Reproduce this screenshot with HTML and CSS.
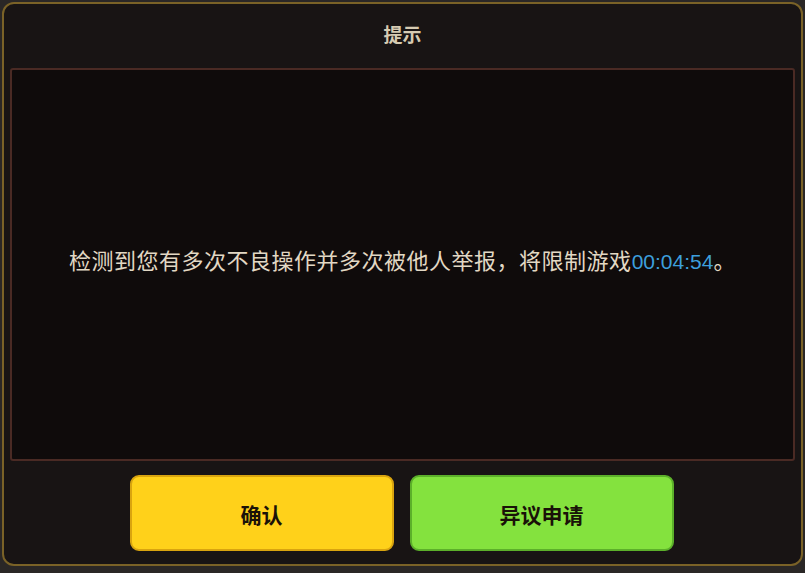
FILE: index.html
```html
<!DOCTYPE html>
<html lang="zh-CN">
<head>
    <meta charset="UTF-8">
    <title>提示</title>
    <link rel="stylesheet" href="styles.css">
</head>
<body>
    <div class="dialog">
        <div class="dialog-title">提示</div>
        <div class="dialog-body">
            <p class="message">检测到您有多次不良操作并多次被他人举报，将限制游戏<span class="timer">00:04:54</span>。</p>
        </div>
        <div class="dialog-actions">
            <button class="btn btn-confirm">确认</button>
            <button class="btn btn-appeal">异议申请</button>
        </div>
    </div>
</body>
</html>
```
FILE: styles.css
```css
html, body {
    margin: 0;
    padding: 0;
}

body {
    background-color: #2a2726;
    font-family: "Noto Sans CJK SC", "Liberation Sans", sans-serif;
    width: 805px;
    height: 573px;
    overflow: hidden;
}

.dialog {
    box-sizing: border-box;
    margin: 2px 2px 0 2px;
    width: 801px;
    height: 564px;
    border: 2px solid #7a6227;
    border-radius: 12px;
    background-color: #181414;
    display: flex;
    flex-direction: column;
    padding: 0 6px 0 6px;
}

.dialog-title {
    height: 64px;
    display: flex;
    align-items: center;
    justify-content: center;
    color: #d6cbb2;
    font-size: 19px;
    font-weight: bold;
    padding-bottom: 6px;
    box-sizing: border-box;
}

.dialog-body {
    box-sizing: border-box;
    height: 393px;
    border: 2px solid #4a2a24;
    border-radius: 3px;
    background-color: #0f0b0b;
    display: flex;
    align-items: center;
    justify-content: center;
    padding-bottom: 12px;
}

.message {
    margin: 0;
    color: #e2d8c4;
    font-size: 22px;
    letter-spacing: 0.5px;
}

.timer {
    color: #3d9fdc;
    font-family: "Liberation Sans", sans-serif;
    font-size: 21px;
    letter-spacing: 0;
}

.dialog-actions {
    display: flex;
    justify-content: center;
    gap: 16px;
    margin-top: 14px;
    padding-right: 2px;
}

.btn {
    box-sizing: border-box;
    width: 264px;
    height: 76px;
    border-radius: 9px;
    font-family: "Noto Sans CJK SC", sans-serif;
    font-size: 21px;
    font-weight: bold;
    color: #1a1208;
    cursor: pointer;
    padding-top: 2px;
}

.btn-confirm {
    background-color: #ffd11a;
    border: 2px solid #d9a40f;
}

.btn-appeal {
    background-color: #84e23e;
    border: 2px solid #5cb02a;
}
```
